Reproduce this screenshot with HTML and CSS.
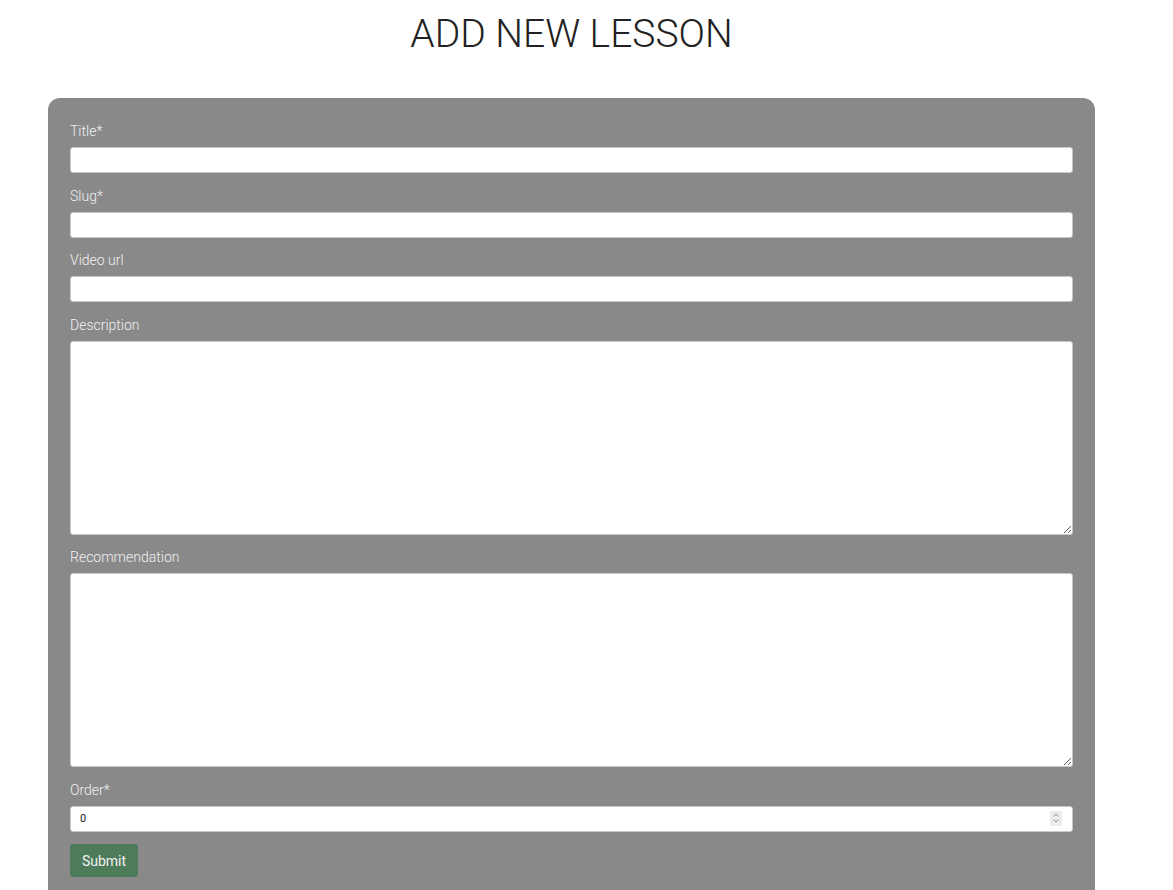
FILE: index.html
```html
<!DOCTYPE html>
<html lang="en">
<head>
<meta charset="utf-8">
<title>Add new lesson</title>
<link rel="stylesheet" href="styles.css">
</head>
<body>
<main class="page">
  <h1 class="page-title">ADD NEW LESSON</h1>
  <form class="card">
    <div class="field">
      <label class="label" for="title">Title*</label>
      <input class="input" id="title" type="text">
    </div>
    <div class="field">
      <label class="label" for="slug">Slug*</label>
      <input class="input" id="slug" type="text">
    </div>
    <div class="field">
      <label class="label" for="video">Video url</label>
      <input class="input" id="video" type="text">
    </div>
    <div class="field">
      <label class="label" for="desc">Description</label>
      <textarea class="input textarea" id="desc"></textarea>
    </div>
    <div class="field">
      <label class="label" for="rec">Recommendation</label>
      <textarea class="input textarea" id="rec"></textarea>
    </div>
    <div class="field">
      <label class="label" for="order">Order*</label>
      <div class="number-wrap">
        <input class="input input-number" id="order" type="text" value="0">
        <span class="spinner" aria-hidden="true">
          <svg width="8" height="12" viewBox="0 0 8 12"><path d="M1.5 4.5 L4 2 L6.5 4.5 M1.5 7.5 L4 10 L6.5 7.5" fill="none" stroke="#8a8a8a" stroke-width="1"/></svg>
        </span>
      </div>
    </div>
    <button class="btn" type="button">Submit</button>
  </form>
</main>
</body>
</html>
```
FILE: styles.css
```css
html, body {
  margin: 0;
  padding: 0;
  background: #ffffff;
}
body {
  font-family: Roboto, "Liberation Sans", Arial, sans-serif;
  overflow: hidden;
}
.page {
  width: 1143px;
}
.page-title {
  margin: 0;
  padding-top: 12px;
  height: 98px;
  box-sizing: border-box;
  text-align: center;
  font-size: 39px;
  font-weight: 300;
  line-height: 44px;
  color: #222222;
  letter-spacing: 0;
}
.card {
  margin: 0 48px;
  background: #898989;
  border-radius: 12px 12px 0 0;
  padding: 23px 22px 40px;
  display: flex;
  flex-direction: column;
}
.field {
  display: flex;
  flex-direction: column;
  margin-bottom: 12.5px;
}
.label {
  font-size: 14px;
  font-weight: 300;
  line-height: 20px;
  color: #f1f1f1;
  margin-bottom: 6px;
}
.input {
  display: block;
  box-sizing: border-box;
  width: 100%;
  height: 26px;
  margin: 0;
  border: 1px solid #c8c8c8;
  border-radius: 3px;
  background: #ffffff;
  font-family: Roboto, "Liberation Sans", Arial, sans-serif;
  font-size: 11px;
  padding: 0 9px;
  outline: none;
}
.textarea {
  height: 194px;
  resize: vertical;
}
.number-wrap {
  position: relative;
}
.input-number {
  color: #222;
}
.spinner {
  position: absolute;
  right: 11px;
  top: 5px;
  width: 12px;
  height: 15px;
  background: #ececec;
  border-radius: 2px;
  display: flex;
  align-items: center;
  justify-content: center;
}
.spinner svg {
  display: block;
}
.btn {
  align-self: flex-start;
  width: 68px;
  height: 33px;
  background: #4e7c5b;
  color: #f2f2f2;
  border: none;
  border-radius: 3px;
  font-family: Roboto, "Liberation Sans", Arial, sans-serif;
  font-size: 14px;
  font-weight: 400;
  padding: 0;
  cursor: pointer;
}
```
